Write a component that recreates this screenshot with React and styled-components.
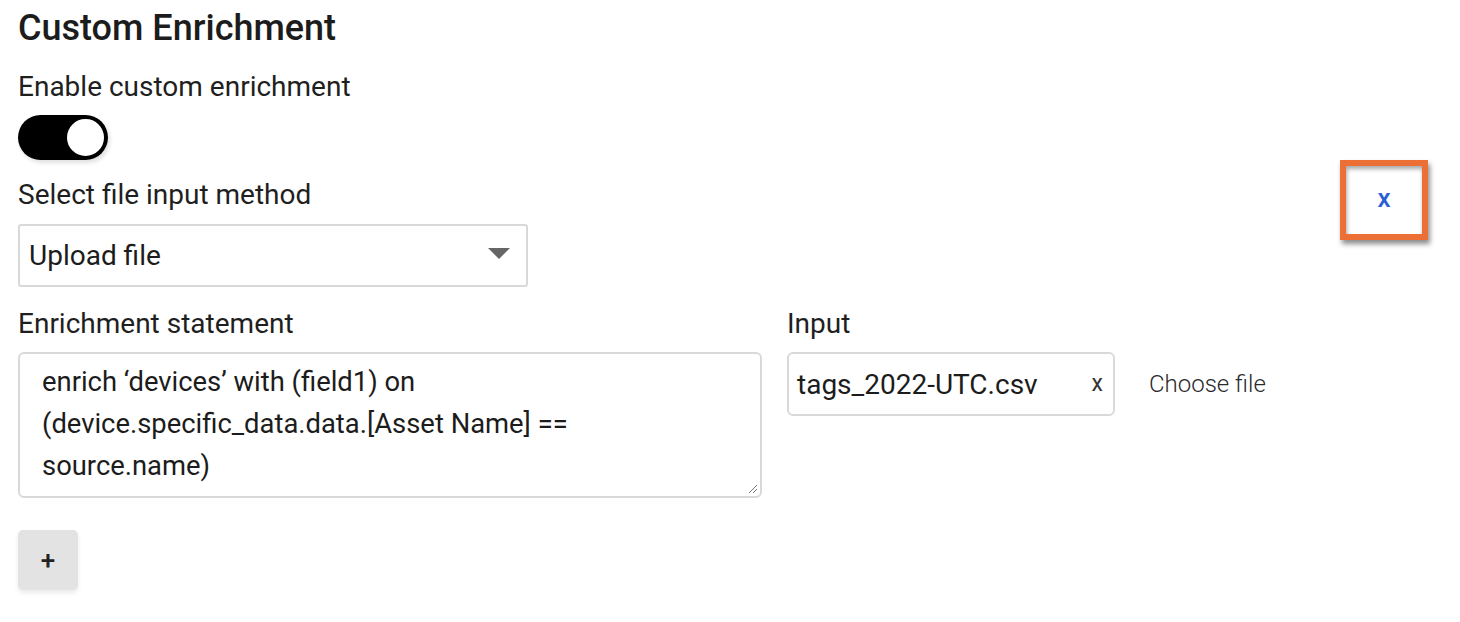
import React from "react";
import styled, { createGlobalStyle } from "styled-components";

const GlobalStyle = createGlobalStyle`
  body {
    margin: 0;
    background: #ffffff;
    font-family: Roboto, "Noto Sans", sans-serif;
    color: #1f1f1f;
  }
`;

function App() {
  return (
    <Page>
      <GlobalStyle />
      <Title>Custom Enrichment</Title>
      <Label>Enable custom enrichment</Label>
      <Toggle>
        <Knob />
      </Toggle>
      <TopRow>
        <div>
          <Label $gap={18}>Select file input method</Label>
          <Select>
            <span>Upload file</span>
            <Caret />
          </Select>
        </div>
        <RemoveBox>
          <RemoveX>x</RemoveX>
        </RemoveBox>
      </TopRow>
      <FieldsRow>
        <Field>
          <Label>Enrichment statement</Label>
          <Statement>
            enrich ‘devices’ with (field1) on
            <br />
            (device.specific_data.data.[Asset Name] ==
            <br />
            source.name)
            <Grip viewBox="0 0 12 12">
              <path d="M11 3 L3 11 M11 7 L7 11" stroke="#777" strokeWidth="1" />
            </Grip>
          </Statement>
        </Field>
        <Field>
          <Label>Input</Label>
          <FileRow>
            <FileBox>
              <span>tags_2022-UTC.csv</span>
              <ClearX>x</ClearX>
            </FileBox>
            <ChooseFile>Choose file</ChooseFile>
          </FileRow>
        </Field>
      </FieldsRow>
      <AddButton>+</AddButton>
    </Page>
  );
}

export default App;

const Page = styled.div`
  padding: 6px 18px 0 18px;
  width: 1460px;
  height: 622px;
  box-sizing: border-box;
`;

const Title = styled.h1`
  margin: 0;
  font-size: 36px;
  font-weight: 500;
  line-height: 44px;
  color: #1c1c1c;
`;

const Label = styled.div`
  font-size: 28px;
  line-height: 34px;
  color: #1f1f1f;
  margin-top: ${(p) => (p.$gap != null ? p.$gap : 20)}px;
`;

const Toggle = styled.div`
  margin-top: 11px;
  width: 90px;
  height: 45px;
  border-radius: 23px;
  background: #000;
  display: flex;
  align-items: center;
  justify-content: flex-end;
  padding: 0 1px;
  box-sizing: border-box;
  box-shadow: 2px 3px 4px rgba(0, 0, 0, 0.12);
`;

const Knob = styled.div`
  width: 37px;
  height: 37px;
  border-radius: 50%;
  background: #fff;
  border: 3px solid #000;
`;

const TopRow = styled.div`
  display: flex;
  justify-content: space-between;
  align-items: flex-start;
  padding-right: 14px;
`;

const Select = styled.div`
  margin-top: 12px;
  width: 510px;
  height: 63px;
  box-sizing: border-box;
  border: 2px solid #d9d9d9;
  border-radius: 3px;
  display: flex;
  align-items: center;
  justify-content: space-between;
  padding: 0 16px 0 9px;
  font-size: 28px;
  color: #1c1c1c;
`;

const Caret = styled.div`
  width: 0;
  height: 0;
  border-left: 11px solid transparent;
  border-right: 11px solid transparent;
  border-top: 11px solid #666;
  margin-top: -4px;
`;

const RemoveBox = styled.div`
  width: 88px;
  height: 80px;
  box-sizing: border-box;
  border: 6px solid #ec6f35;
  display: flex;
  align-items: center;
  justify-content: center;
  box-shadow: 2px 4px 5px rgba(0, 0, 0, 0.45), inset 1px 3px 4px rgba(0, 0, 0, 0.35);
`;

const RemoveX = styled.span`
  color: #2b5fd6;
  font-size: 26px;
  font-weight: 500;
  margin-top: -4px;
`;

const FieldsRow = styled.div`
  display: flex;
  gap: 25px;
`;

const Field = styled.div`
  display: flex;
  flex-direction: column;
`;

const Statement = styled.div`
  position: relative;
  margin-top: 11px;
  width: 744px;
  height: 146px;
  box-sizing: border-box;
  border: 2px solid #d9d9d9;
  border-radius: 6px;
  padding: 7px 22px;
  font-size: 27.4px;
  line-height: 42px;
  color: #1c1c1c;
`;

const Grip = styled.svg`
  position: absolute;
  right: 2px;
  bottom: 2px;
  width: 12px;
  height: 12px;
`;

const FileRow = styled.div`
  display: flex;
  align-items: center;
  gap: 34px;
  margin-top: 11px;
`;

const FileBox = styled.div`
  width: 328px;
  height: 64px;
  box-sizing: border-box;
  border: 2px solid #d9d9d9;
  border-radius: 6px;
  display: flex;
  align-items: center;
  justify-content: space-between;
  padding: 0 10px 0 8px;
  font-size: 28px;
  color: #1c1c1c;
`;

const ClearX = styled.span`
  font-size: 23px;
  color: #333;
  margin-top: -2px;
`;

const ChooseFile = styled.span`
  font-size: 24px;
  font-weight: 300;
  color: #2a2a2a;
`;

const AddButton = styled.button`
  margin-top: 32px;
  width: 60px;
  height: 60px;
  border: none;
  border-radius: 5px;
  background: #e3e3e3;
  font-family: Roboto, sans-serif;
  font-size: 26px;
  font-weight: 500;
  color: #222;
  box-shadow: 0 3px 4px rgba(0, 0, 0, 0.08);
  padding: 0;
`;
